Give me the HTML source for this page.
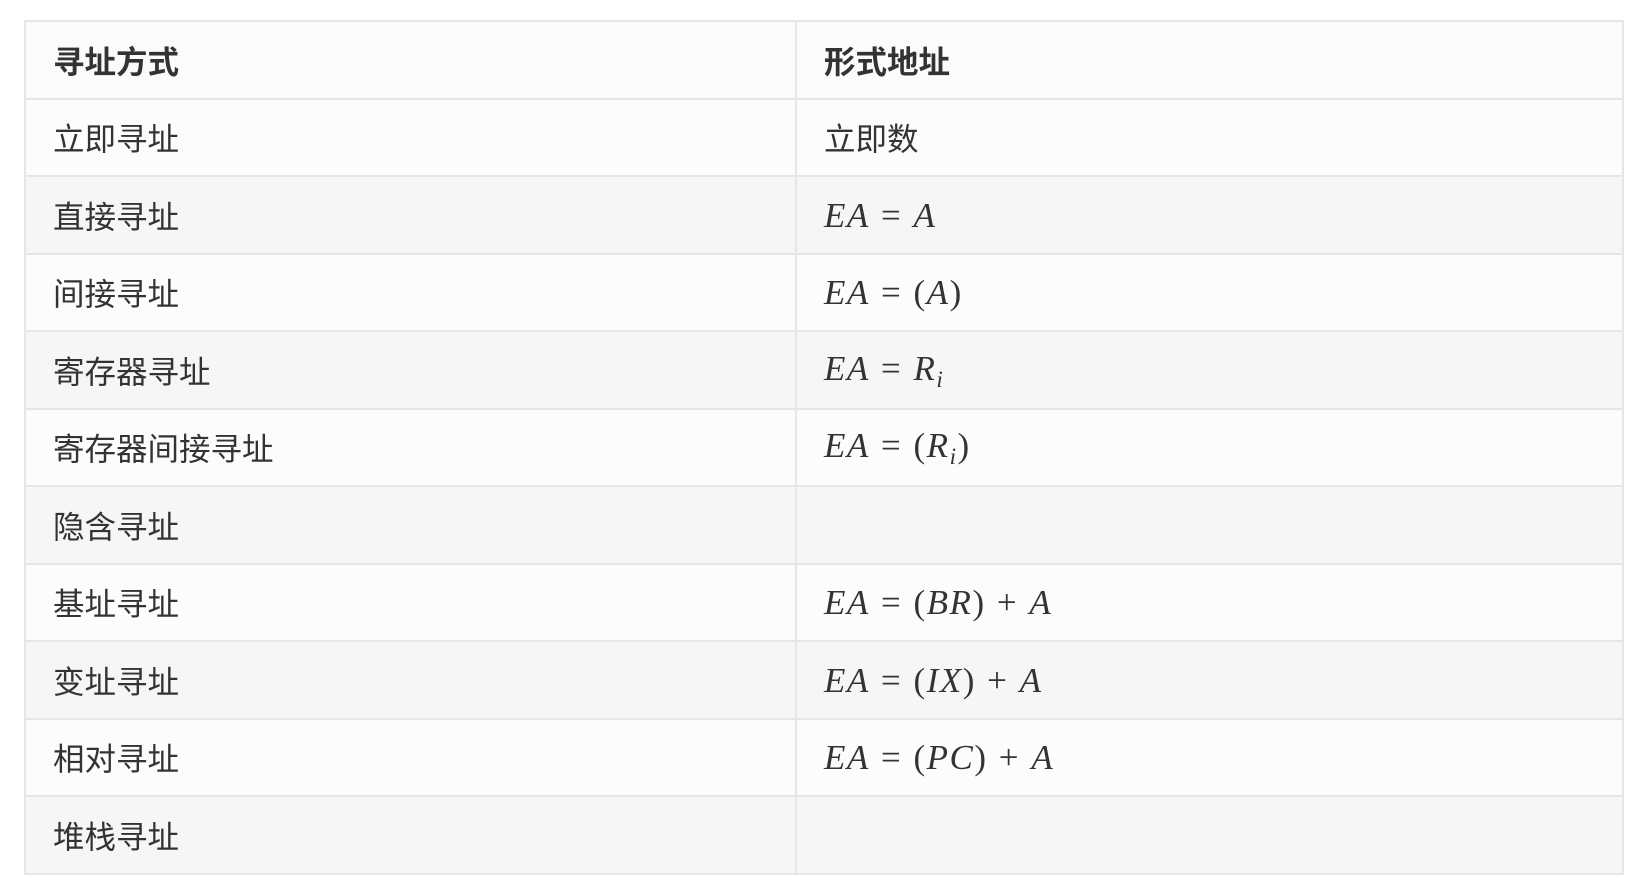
<!DOCTYPE html>
<html><head><meta charset="utf-8"><style>
html,body{margin:0;padding:0;background:#fff;width:1642px;height:894px;overflow:hidden}
table{position:absolute;left:24px;top:20px;width:1600px;border-collapse:collapse;font-family:"Liberation Sans","Noto Sans CJK SC",sans-serif;font-size:31.5px;color:#333}
td,th{border:2px solid #e6e6e6;height:75.5px;padding:0 0 0 27px;text-align:left;vertical-align:middle}
th{font-weight:bold;background:#fbfbfb}
tr:nth-child(even) td{background:#fcfcfc}
tr:nth-child(odd) td{background:#f6f6f6}
td:first-child,th:first-child{width:742px}
.m{font-family:"Liberation Serif","DejaVu Serif",serif;font-size:35px;color:#333;word-spacing:1px;letter-spacing:1.5px}
.m span{position:relative;top:1px}
.m i{font-style:italic}
sub{font-size:23px;vertical-align:-7px;font-style:italic}
</style></head><body>
<table>
<tr><th>寻址方式</th><th>形式地址</th></tr>
<tr><td>立即寻址</td><td>立即数</td></tr>
<tr><td>直接寻址</td><td class="m"><span><i>EA</i> = <i>A</i></span></td></tr>
<tr><td>间接寻址</td><td class="m"><span><i>EA</i> = (<i>A</i>)</span></td></tr>
<tr><td>寄存器寻址</td><td class="m"><span><i>EA</i> = <i>R</i><sub>i</sub></span></td></tr>
<tr><td>寄存器间接寻址</td><td class="m"><span><i>EA</i> = (<i>R</i><sub>i</sub>)</span></td></tr>
<tr><td>隐含寻址</td><td></td></tr>
<tr><td>基址寻址</td><td class="m"><span><i>EA</i> = (<i>BR</i>) + <i>A</i></span></td></tr>
<tr><td>变址寻址</td><td class="m"><span><i>EA</i> = (<i>IX</i>) + <i>A</i></span></td></tr>
<tr><td>相对寻址</td><td class="m"><span><i>EA</i> = (<i>PC</i>) + <i>A</i></span></td></tr>
<tr><td>堆栈寻址</td><td></td></tr>
</table>
</body></html>
